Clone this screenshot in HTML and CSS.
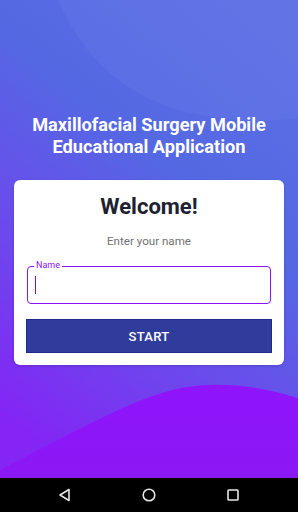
FILE: index.html
```html
<!DOCTYPE html>
<html>
<head>
<meta charset="utf-8">
<link rel="stylesheet" href="styles.css">
</head>
<body>
<div class="phone">
  <main class="screen">
    <svg class="backdrop" width="298" height="478" viewBox="0 0 298 478" preserveAspectRatio="none">
      <defs>
        <linearGradient id="bg" x1="0.75" y1="0" x2="0.25" y2="1">
          <stop offset="0" stop-color="#5b6ee4"/>
          <stop offset="0.35" stop-color="#5468e3"/>
          <stop offset="0.65" stop-color="#6a4cec"/>
          <stop offset="1" stop-color="#8424f5"/>
        </linearGradient>
        <linearGradient id="wave" x1="0" y1="0" x2="0" y2="1">
          <stop offset="0" stop-color="#8f14fb"/>
          <stop offset="1" stop-color="#8a18f4"/>
        </linearGradient>
      </defs>
      <rect width="298" height="478" fill="url(#bg)"/>
      <path d="M0 200 C80 180 200 150 298 140 L298 330 L0 330 Z" fill="#4c7fe6" fill-opacity="0.0"/>
      <path d="M58 0 C80 50 120 100 200 115 C240 122 270 122 298 118 L298 0 Z" fill="#ffffff" fill-opacity="0.04"/>
      <path d="M0 470 C60 440 120 405 165 392 C195 383 240 380 298 398 L298 478 L0 478 Z" fill="url(#wave)"/>
    </svg>
    <h1 class="title">Maxillofacial Surgery Mobile<br>Educational Application</h1>
    <section class="card">
      <h2 class="welcome">Welcome!</h2>
      <p class="hint">Enter your name</p>
      <div class="field">
        <span class="field-label">Name</span>
        <span class="caret"></span>
      </div>
      <button class="start">START</button>
    </section>
  </main>
  <nav class="navbar">
    <svg width="14" height="14" viewBox="0 0 14 14"><path d="M11 1.5 L11 12.5 L2 7 Z" fill="none" stroke="#e6e6e6" stroke-width="1.6" stroke-linejoin="round"/></svg>
    <svg width="14" height="14" viewBox="0 0 14 14"><circle cx="7" cy="7" r="5.8" fill="none" stroke="#e6e6e6" stroke-width="1.6"/></svg>
    <svg width="14" height="14" viewBox="0 0 14 14"><rect x="2" y="2" width="10" height="10" rx="0.8" fill="none" stroke="#e6e6e6" stroke-width="1.6"/></svg>
  </nav>
</div>
</body>
</html>
```
FILE: styles.css
```css
* { box-sizing: border-box; }
html, body { margin: 0; padding: 0; }
body {
  width: 298px;
  height: 512px;
  overflow: hidden;
  font-family: Roboto, "Noto Sans", "Liberation Sans", sans-serif;
  background: #000;
}
.phone {
  display: flex;
  flex-direction: column;
  width: 298px;
  height: 512px;
}
.screen {
  position: relative;
  height: 478px;
  display: flex;
  flex-direction: column;
  align-items: center;
  padding-top: 114px;
}
.backdrop {
  position: absolute;
  left: 0;
  top: 0;
  z-index: 0;
}
.title {
  position: relative;
  margin: 0;
  color: #fff;
  font-size: 18.2px;
  font-weight: 700;
  line-height: 22px;
  text-align: center;
}
.card {
  position: relative;
  margin-top: 22px;
  width: 270px;
  background: #fff;
  border-radius: 6px;
  padding: 14px 12px 12px;
  display: flex;
  flex-direction: column;
  align-items: stretch;
  box-shadow: 0 1px 3px rgba(40, 20, 120, 0.25);
}
.welcome {
  margin: 0;
  text-align: center;
  font-size: 22px;
  font-weight: 700;
  line-height: 26px;
  color: #1e2230;
}
.hint {
  margin: 13px 0 0;
  text-align: center;
  font-size: 11.6px;
  line-height: 16px;
  color: #727272;
}
.field {
  position: relative;
  margin: 17px 1px 0;
  height: 38px;
  border: 1.6px solid #8a12f7;
  border-radius: 4px;
  display: flex;
  align-items: center;
  padding-left: 7px;
}
.field-label {
  position: absolute;
  left: 6px;
  top: -7px;
  padding: 0 2px;
  background: #fff;
  font-size: 9px;
  line-height: 11px;
  color: #8a12f7;
}
.caret {
  width: 1.3px;
  height: 18px;
  background: #7a10e6;
}
.start {
  margin-top: 15px;
  height: 34px;
  border: 1px solid #1d2a8c;
  background: #2f3c9b;
  color: #fff;
  font-family: Roboto, "Noto Sans", "Liberation Sans", sans-serif;
  font-size: 13px;
  font-weight: 500;
  letter-spacing: 0.3px;
  padding: 0;
}
.navbar {
  height: 34px;
  background: #000;
  display: flex;
  align-items: center;
  justify-content: center;
  gap: 70px;
}
```
